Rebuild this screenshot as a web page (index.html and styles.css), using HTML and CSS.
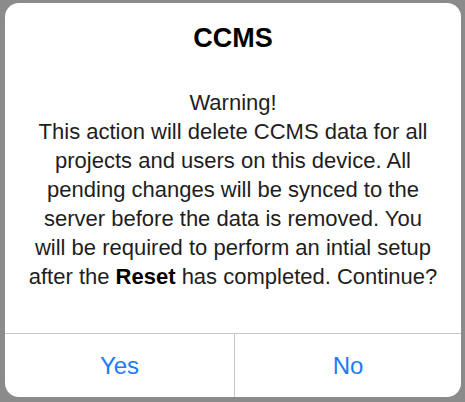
FILE: index.html
```html
<!DOCTYPE html>
<html>
<head>
<meta charset="utf-8">
<link rel="stylesheet" href="styles.css">
</head>
<body>
<div class="alert">
  <div class="alert-body">
    <h1 class="alert-title">CCMS</h1>
    <p class="alert-message">Warning!<br>This action will delete CCMS data for all<br>projects and users on this device. All<br>pending changes will be synced to the<br>server before the data is removed. You<br>will be required to perform an intial setup<br>after the <b>Reset</b> has completed. Continue?</p>
  </div>
  <div class="alert-actions">
    <div class="alert-btn">Yes</div>
    <div class="alert-btn">No</div>
  </div>
</div>
</body>
</html>
```

FILE: styles.css
```css
html, body {
  margin: 0;
  padding: 0;
}
body {
  width: 465px;
  height: 402px;
  background: #8b8b8b;
  padding: 3px 4px 5px 5px;
  box-sizing: border-box;
  font-family: "Liberation Sans", Arial, sans-serif;
}
.alert {
  height: 394px;
  background: #fff;
  border-radius: 14px;
  display: flex;
  flex-direction: column;
  overflow: hidden;
}
.alert-body {
  flex: 1;
  display: flex;
  flex-direction: column;
  align-items: center;
  padding: 20px 0 0;
}
.alert-title {
  margin: 0;
  font-size: 27px;
  font-weight: bold;
  color: #000;
  line-height: 30px;
}
.alert-message {
  margin: 35px 0 0;
  font-size: 22px;
  line-height: 29px;
  text-align: center;
  color: #1e1e1e;
  white-space: nowrap;
}
.alert-message b {
  color: #000;
}
.alert-actions {
  height: 63px;
  border-top: 1px solid #c8c8c8;
  display: grid;
  grid-template-columns: 229px 1fr;
}
.alert-btn {
  display: flex;
  align-items: center;
  justify-content: center;
  font-size: 24px;
  color: #1c7cf5;
}
.alert-btn + .alert-btn {
  border-left: 1px solid #c8c8c8;
}
```
